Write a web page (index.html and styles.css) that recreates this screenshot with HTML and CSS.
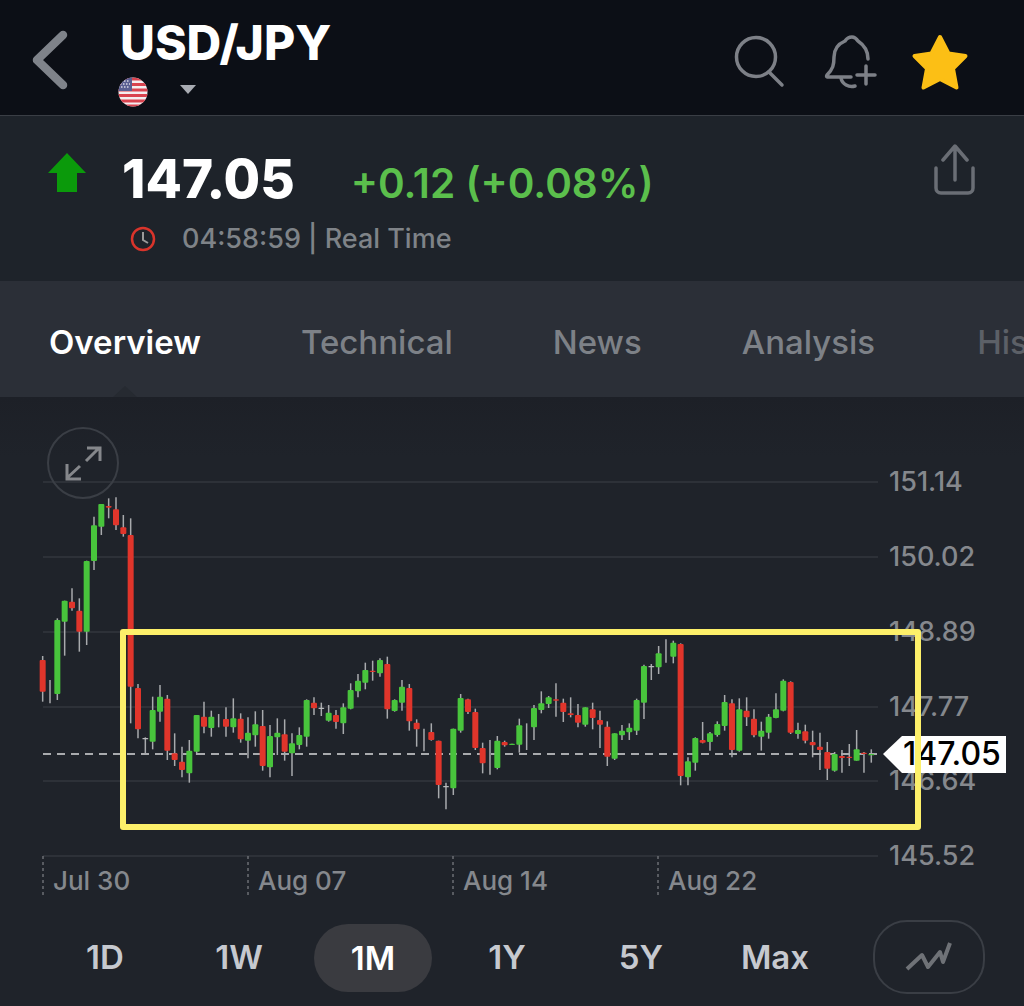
FILE: index.html
```html
<!DOCTYPE html>
<html lang="en">
<head>
<meta charset="utf-8">
<title>USD/JPY</title>
<link rel="stylesheet" href="styles.css">
</head>
<body>
<main class="screen">
  <header class="topbar">
    <svg class="back" viewBox="30 28 40 64" width="40" height="64"><path d="M63 35 37 60l26 25"/></svg>
    <div class="instrument">
      <h1 class="symbol">USD/JPY</h1>
      <div class="market">
        <svg class="flag" viewBox="0 0 30 30" width="30" height="30">
          <defs><clipPath id="flagclip"><circle cx="15" cy="15" r="14.5"/></clipPath></defs>
          <g clip-path="url(#flagclip)">
            <rect width="30" height="30" fill="#f4eef0"/>
            <path class="flag-stripes" d="M0 2h30M0 7.5h30M0 13h30M0 18.500h30M0 24h30M0 29h30"/>
            <rect width="14" height="14" fill="#5a5f92"/>
            <path class="flag-stars" d="M3 4h9M2 7h10M3 10h9"/>
          </g>
        </svg>
        <span class="caret"></span>
      </div>
    </div>
    <div class="actions">
      <svg class="icon search" viewBox="732 34 56 56" width="56" height="56"><circle cx="756" cy="57" r="19.500"/><path d="m769 72 13 13"/></svg>
      <svg class="icon bell" viewBox="822 34 58 56" width="58" height="56"><path d="M868 59c0-8-4-14-10-18-2-3-3-4-6-4s-5 1-7 4c-7 3-11 9-11 16 0 8-1 12-7 18-1 2 0 2 2 2h22"/><path d="M841 78c1 6 8 10 14 8"/><path d="M866 66v18M857 75h18"/></svg>
      <svg class="star" viewBox="910 32 60 60" width="60" height="60"><path d="m940 37 8.500 16.500 17 2.500-12.500 12.500 3.500 19-16.500-8.500-16.500 8.500 3.500-19L914.500 56l17-2.500z"/></svg>
    </div>
  </header>

  <section class="quote">
    <svg class="up" viewBox="48 153 38 39" width="38" height="39"><path d="m67 153 19 20h-9v19H57v-19h-9z"/></svg>
    <div class="quote-main">
      <div class="quote-prices">
        <span class="price">147.05</span>
        <span class="change">+0.12 (+0.08%)</span>
      </div>
      <div class="quote-meta">
        <svg class="clock" viewBox="130 224 26 26" width="26" height="26"><circle cx="143" cy="237" r="11"/><path d="M143 230v8l5 3"/></svg>
        <span>04:58:59 | Real Time</span>
      </div>
    </div>
    <svg class="share" viewBox="932 144 46 52" width="46" height="52"><path d="M936 168v20c0 3 2 5 5 5h27c3 0 5-2 5-5v-20"/><path d="M955 180v-33M943 160l12-14 12 14"/></svg>
  </section>

  <nav class="tabs">
    <a class="tab tab-active">Overview</a>
    <a class="tab">Technical</a>
    <a class="tab">News</a>
    <a class="tab">Analysis</a>
    <a class="tab tab-faded">History</a>
  </nav>

  <section class="chart">
    <svg class="plot" id="plot" viewBox="0 397 1024 513" width="1024" height="513">
      <g class="grid">
        <path d="M43 482h835M43 557h835M43 632h835M43 707h835M43 781h835M43 856h835"/>
      </g>
      <path class="ticks" d="M43 856v40M248 856v40M453 856v40M658 856v40"/>
      <path class="lastline" d="M43 754h835"/>
      <g id="candles"></g>
      <circle class="expand-ring" cx="83" cy="463" r="35"/>
      <path class="expand-arrows" d="M86 461 99 448M87 448h13v13M80 466 67 478M67 464v15h14"/>
      <g class="axis">
        <text x="889" y="491">151.14</text>
        <text x="889" y="566">150.02</text>
        <text x="889" y="641">148.89</text>
        <text x="889" y="716">147.77</text>
        <text x="889" y="790">146.64</text>
        <text x="889" y="865">145.52</text>
      </g>
      <g class="dates">
        <text x="53" y="890">Jul 30</text>
        <text x="258" y="890">Aug 07</text>
        <text x="463" y="890">Aug 14</text>
        <text x="668" y="890">Aug 22</text>
      </g>
      <path class="tag" d="M883 754 902 736h104v37H902z"/>
      <text class="tag-text" x="903" y="765">147.05</text>
    </svg>
    <div class="highlight"></div>
  </section>

  <footer class="ranges">
    <a class="range">1D</a>
    <a class="range">1W</a>
    <a class="range range-active">1M</a>
    <a class="range">1Y</a>
    <a class="range">5Y</a>
    <a class="range">Max</a>
    <button class="chart-type" type="button">
      <svg viewBox="904 940 52 34" width="52" height="34"><path d="m908 969 15-14 6 12 12-15 3 10 7-19"/></svg>
    </button>
  </footer>
</main>
<script src="chart.js"></script>
</body>
</html>
```

FILE: styles.css
```css
* { box-sizing: border-box; }
html, body { margin: 0; padding: 0; background: #1f232a; }
body { font-family: Inter, "Liberation Sans", sans-serif; }
.screen { width: 1024px; height: 1006px; overflow: hidden; display: flex; flex-direction: column; }

.topbar {
  height: 116px;
  display: flex;
  align-items: center;
  background: #0c0f16;
  border-bottom: 1px solid #3a3e45;
  padding-left: 30px;
  padding-right: 54px;
}
.back { fill: none; stroke: #7f838a; stroke-width: 8.500; stroke-linecap: round; stroke-linejoin: round; margin-top: 5px; }
.instrument { margin-left: 48px; display: flex; flex-direction: column; margin-top: 8px; }
.symbol { margin: 0 0 0 2px; font-size: 48px; line-height: 52px; font-weight: 800; color: #fff; }
.market { display: flex; align-items: center; margin-top: 8px; }
.flag { display: block; }
.flag-stripes { stroke: #d9434f; stroke-width: 2.800; fill: none; }
.flag-stars { stroke: #d8d8e4; stroke-width: 1.500; stroke-dasharray: 1.500 1.500; fill: none; }
.caret { margin-left: 32px; margin-top: -4px; width: 0; height: 0; border-left: 8px solid transparent; border-right: 8px solid transparent; border-top: 9px solid #a9acb3; }

.actions { margin-left: auto; display: flex; align-items: center; gap: 34px; margin-top: 8px; }
.icon { fill: none; stroke: #7d8087; stroke-width: 3.500; stroke-linecap: round; stroke-linejoin: round; }
.bell { margin-right: -4px; }
.star { fill: #fcbf15; stroke: #fcbf15; stroke-width: 4; stroke-linejoin: round; }

.quote {
  height: 165px;
  display: flex;
  align-items: flex-start;
  padding: 37px 46px 0 48px;
  background: #1e232a;
}
.up { fill: #0b9a0b; flex: none; }
.quote-main { margin-left: 36px; flex: 1; }
.quote-prices { display: flex; align-items: baseline; margin-top: -4px; }
.price { font-size: 53px; line-height: 60px; font-weight: 800; color: #fff; }
.change { margin-left: 56px; font-size: 40.500px; line-height: 60px; font-weight: 600; color: #5bbf4c; }
.quote-meta { display: flex; align-items: center; margin-top: 9px; margin-left: 8px; font-size: 27px; line-height: 32px; font-weight: 500; color: #7f8388; }
.clock { margin-right: 26px; fill: none; stroke: #d9342b; stroke-width: 2.500; }
.clock path { stroke: #9a9a9a; stroke-width: 2; }
.share { fill: none; stroke: #6a6e75; stroke-width: 3.500; stroke-linecap: round; stroke-linejoin: round; flex: none; margin-top: -9px; }

.tabs {
  height: 116px;
  display: flex;
  align-items: center;
  gap: 100px;
  padding-left: 49px;
  padding-top: 6px;
  background: #2b2f37;
  overflow: hidden;
  white-space: nowrap;
  position: relative;
}
.tab { font-size: 33px; line-height: 40px; font-weight: 500; color: #7d8187; position: relative; flex: none; }
.tab-active { color: #fff; font-weight: 600; }
.tab-faded { opacity: 0.6; margin-left: 2px; }
.tab-active::after {
  content: "";
  position: absolute;
  left: 64px;
  bottom: -35px;
  width: 0;
  height: 0;
  border-left: 12px solid transparent;
  border-right: 12px solid transparent;
  border-bottom: 11px solid #262a31;
}

.chart { height: 513px; position: relative; flex: none; background: linear-gradient(#1d2027, #1f232a 60px); }
.plot { display: block; }
.grid path { stroke: #2d3138; stroke-width: 2; fill: none; }
.ticks { stroke: #6c6f74; stroke-width: 1.500; stroke-dasharray: 3 3; fill: none; }
.lastline { stroke: #a9abae; stroke-width: 2; stroke-dasharray: 8 6; fill: none; }
.wick { stroke: #a8aaad; stroke-width: 1.500; }
.body-g { fill: #48c43c; }
.body-r { fill: #e0352b; }
.body-n { fill: #b8babc; }
.expand-ring { fill: none; stroke: #3a3e45; stroke-width: 2; }
.expand-arrows { fill: none; stroke: #85878b; stroke-width: 3; }
.axis text { font-size: 27px; font-weight: 500; fill: #85888d; }
.dates text { font-size: 26px; font-weight: 500; fill: #85888d; }
.tag { fill: #fff; }
.tag-text { font-size: 32px; font-weight: 500; fill: #000; }
.highlight {
  position: absolute;
  left: 120px;
  top: 232px;
  width: 801px;
  height: 201px;
  border: 6px solid #fdf06a;
  border-radius: 3px;
}

.ranges { height: 96px; display: flex; align-items: center; padding-left: 38px; }
.range { width: 134px; height: 68px; display: flex; align-items: center; justify-content: center; font-size: 33px; font-weight: 600; color: #c6c9cf; margin-top: -3px; }
.range-active { width: 118px; margin: -3px 8px; border-radius: 34px; background: #3a3b40; color: #fff; }
.chart-type { margin-left: 31px; margin-top: -2px; width: 112px; height: 74px; border: 2px solid #3a3e45; border-radius: 34px; background: none; padding: 0; display: flex; align-items: center; justify-content: center; }
.chart-type path { fill: none; stroke: #6f7277; stroke-width: 4; stroke-linejoin: round; }
```

FILE: chart.js
```js
// Candles read as [colour, wickTop, wickBottom, bodyTop, bodyBottom], in thirds of a pixel.
var FIRST = [
  ["r",498,635,510,605],["n",570,640],["g",385,630,390,612],["g",332,497,332,395],["r",295,362,335,355],
  ["r",325,485,362,425],["g",212,465,213,425],["g",80,240,106,213],["g",42,135,42,110],["r",25,85,48,53],
  ["r",22,120,58,106],["r",75,140,112,132],["r",85,700,135,590],["r",582,745,594,718],["n",742,792,744,748],
  ["g",620,778,660,755],["g",585,695,620,665],["r",615,810,626,782],["r",730,828,790,810],["r",770,862,815,840],
  ["g",750,878,782,850],["g",675,795,675,785],["r",635,730,680,710],["g",662,740,680,714],["n",672,712],
  ["r",652,740,687,710],["g",625,728,685,712],["r",670,758,686,748],["g",682,805,728,752],["g",664,770,703,736],
  ["r",660,842,708,828],["g",705,862,738,832],["g",685,795,728,742],["r",688,812,733,785],["g",730,858,760,790],
  ["g",712,778,735,765],["g",628,770,630,740],["r",622,675,638,655],["n",638,678,653,657],["g",645,695,668,692],
  ["r",660,716,675,696],["g",640,732,652,700],["g",580,658,600,656],["g",552,622,572,604]
];
var SECOND = [
  ["g",128,208,150,188],["r",122,182,152,156],["g",115,170,120,160],["r",110,296,132,268],["g",238,275,240,273],
  ["g",180,272,200,248],["r",192,332,204,304],["r",298,380,308,328],["n",326,394],["r",310,362,336,360],
  ["r",362,535,362,495],["n",488,568,498,502],["g",326,525,326,505],["g",222,338,234,332],["r",236,282,238,276],
  ["r",266,390,276,384],["r",368,460,384,430],["n",360,464],["g",348,448,362,444],["r",362,380,366,376],
  ["g",371,375,371,375],["g",296,398,316,374],["n",310,390],["g",255,360,264,322],["g",214,280,250,270],
  ["g",228,264,232,252],["r",190,290,238,242],["r",236,306,248,276],["r",232,292,280,285],["r",252,322,285,308],
  ["g",262,320,262,314],["r",248,328,268,294],["r",272,384,300,314],["r",304,438,320,410],["g",340,420,340,416],
  ["g",315,360,332,346],["g",310,360,323,337],["g",236,345,240,332],["g",134,297,138,248],["n",132,180,138,142],
  ["g",78,162,100,142],["n",58,128],["g",62,130,68,110],["r",70,496,72,468],["g",412,496,424,472],
  ["g",352,452,354,428],["r",306,370,360,368],["g",336,392,340,366],["g",304,350,312,345],["g",225,332,246,318],
  ["r",238,412,250,390],["g",235,395,268,392],["r",232,318,272,292],["r",268,352,296,346],["g",305,392,332,350],
  ["g",282,356,290,338],["g",220,295,268,294],["g",178,274,182,272],["r",184,342,186,338],["g",308,356,330,342],
  ["r",314,370,334,362],["r",332,412,366,376],["r",338,450,380,390],["r",366,480,396,446],["g",396,455,402,452],
  ["r",390,458,408,414],["r",372,438,410,414],["g",330,422,388,422],["r",396,458,398,402],["g",388,428,402,406]
];

var NS = "http://www.w3.org/2000/svg";
var group = document.getElementById("candles");

function add(tag, cls, attrs) {
  var el = document.createElementNS(NS, tag);
  el.setAttribute("class", cls);
  for (var k in attrs) el.setAttribute(k, attrs[k]);
  group.appendChild(el);
}

function draw(list, startIndex, originY) {
  list.forEach(function (c, n) {
    var x = 42.67 + 7.333 * (startIndex + n);
    add("line", "wick", { x1: x, x2: x, y1: originY + c[1] / 3, y2: originY + c[2] / 3 });
    if (c.length > 3) {
      var top = originY + c[3] / 3;
      var h = Math.max((c[4] - c[3]) / 3, 1.2);
      add("rect", "body-" + c[0], { x: x - 3, y: top, width: 6, height: h, rx: 1 });
    }
  });
}

draw(FIRST, 0, 490);
draw(SECOND, 44, 620);
```
